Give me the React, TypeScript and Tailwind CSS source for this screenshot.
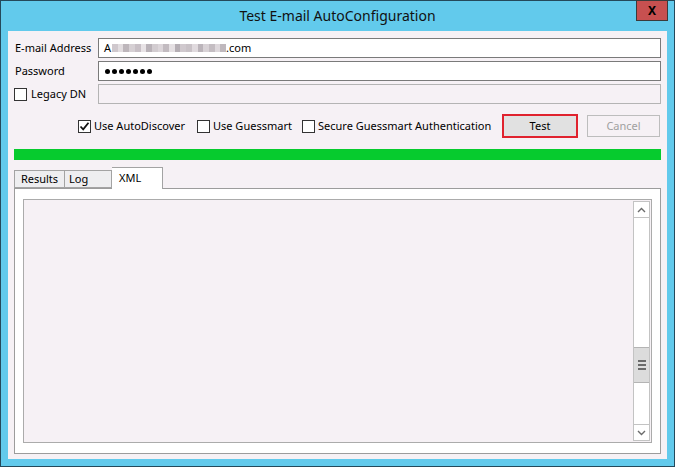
import React from "react";

const font = { fontFamily: '"Noto Sans", "Liberation Sans", Arial, sans-serif' };

// blurred e-mail characters, drawn as soft blocks
const blur = [
  "#cfc8cd", "#e2dde0", "#bdb6bb", "#d6d0d4", "#c8c0c6", "#e8e3e6", "#b9b2b8", "#d2ccd0",
  "#dcd6da", "#c2bbc0", "#e5e0e3", "#b5aeb4", "#d0c9ce", "#c9c2c7", "#e0dade", "#bbb4ba",
  "#d8d2d6", "#c4bdc2", "#ded8dc", "#bfb8bd",
];

function Check({ checked }: { checked?: boolean }) {
  return (
    <span className="flex h-[13px] w-[13px] shrink-0 items-center justify-center border border-[#333333] bg-white">
      {checked && (
        <svg width="11" height="11" viewBox="0 0 11 11">
          <path d="M1.5 5.5 L4.2 8.3 L9.5 1.8" fill="none" stroke="#111" strokeWidth="1.8" />
        </svg>
      )}
    </span>
  );
}

function Chevron({ up }: { up?: boolean }) {
  return (
    <svg width="9" height="6" viewBox="0 0 9 6">
      <path d={up ? "M1 5 L4.5 1.5 L8 5" : "M1 1 L4.5 4.5 L8 1"} fill="none" stroke="#6b6b6b" strokeWidth="1.4" />
    </svg>
  );
}

export default function App() {
  return (
    <div
      className="relative flex h-[467px] w-[675px] flex-col border border-[#24495b] bg-[#62caec] text-[11px] text-black"
      style={font}
    >
      {/* Title bar */}
      <div className="flex h-[30px] shrink-0 items-center justify-center pb-[2px] text-[14px] text-[#111]">
        Test E-mail AutoConfiguration
      </div>
      <div className="absolute -top-px right-[6px] flex h-[21px] w-[32px] items-center justify-center border border-[#3b3b3b] bg-[#c75050] text-[12px] font-bold leading-none text-black">
        X
      </div>

      {/* Client area */}
      <div className="mx-[7px] mb-[7px] flex flex-1 flex-col bg-[#f6f1f5] px-[6px] pt-[7px]">
        <div className="flex h-[20px] items-center">
          <span className="w-[84px] pl-px">E-mail Address</span>
          <div className="flex h-[20px] flex-1 items-center border border-[#7a7a7a] bg-white pl-[5px]">
            <span>A</span>
            <span className="ml-px flex h-[8px] w-[114px]">
              {blur.map((c, i) => (
                <span key={i} className="h-full flex-1" style={{ backgroundColor: c }} />
              ))}
            </span>
            <span>.com</span>
          </div>
        </div>
        <div className="mt-[3px] flex h-[20px] items-center">
          <span className="w-[84px] pl-px">Password</span>
          <div className="flex h-[20px] flex-1 items-center gap-[2px] border border-[#7a7a7a] bg-white pl-[6px]">
            {[0, 1, 2, 3, 4, 5, 6].map((i) => (
              <span key={i} className="h-[5px] w-[5px] rounded-full bg-black" />
            ))}
          </div>
        </div>
        <div className="mt-[3px] flex h-[20px] items-center">
          <span className="flex w-[84px] items-center gap-[4px]">
            <Check />
            Legacy DN
          </span>
          <div className="h-[20px] flex-1 border border-[#b4b4b4] bg-[#f6f1f5]" />
        </div>

        {/* Options + buttons */}
        <div className="mt-[10px] flex h-[24px] items-center">
          <span className="ml-[64px] flex w-[119px] items-center gap-[3px] whitespace-nowrap">
            <Check checked />
            Use AutoDiscover
          </span>
          <span className="flex w-[105px] items-center gap-[3px] whitespace-nowrap">
            <Check />
            Use Guessmart
          </span>
          <span className="flex w-[200px] items-center gap-[3px] whitespace-nowrap">
            <Check />
            Secure Guessmart Authentication
          </span>
          <div className="flex h-[24px] w-[76px] items-center justify-center border-2 border-[#e0222e] bg-[#e1e1e1]">
            Test
          </div>
          <div className="ml-[9px] flex h-[22px] w-[73px] items-center justify-center border border-[#bdbdbd] text-[#a0a0a0]">
            Cancel
          </div>
        </div>

        {/* Progress */}
        <div className="mt-[11px] h-[11px] bg-[#06cb2e]" />

        {/* Tabs */}
        <div className="mt-[7px] flex h-[21px] items-end">
          <div className="flex h-[18px] w-[51px] items-center justify-center border border-[#a3a3a3] bg-[#eeeef0]">
            Results
          </div>
          <div className="flex h-[18px] w-[47px] items-center border border-l-0 border-[#a3a3a3] bg-[#eeeef0] pl-[4px]">
            Log
          </div>
          <div className="relative z-10 -mb-px flex h-[22px] w-[51px] items-start border border-b-0 border-l-0 border-[#a3a3a3] bg-white pl-[7px] pt-[2px]">
            XML
          </div>
        </div>
        <div className="mb-[5px] flex flex-1 flex-col border border-[#9c9c9c] bg-white px-[8px] pt-[10px] pb-[10px]">
          <div className="flex flex-1 justify-end border border-[#ababab] bg-[#f6f1f5] p-px">
            <div className="flex w-[17px] flex-col border border-[#c3c3c3] bg-white">
              <div className="flex h-[16px] items-center justify-center border-b border-[#c3c3c3]">
                <Chevron up />
              </div>
              <div className="flex-1">
                <div className="mt-[129px] flex h-[36px] flex-col items-center justify-center gap-[2px] border-y border-[#b4b4b4] bg-[#dcdcdc]">
                  <span className="h-[2px] w-[8px] bg-[#6a6a6a]" />
                  <span className="h-[2px] w-[8px] bg-[#6a6a6a]" />
                  <span className="h-[2px] w-[8px] bg-[#6a6a6a]" />
                </div>
              </div>
              <div className="flex h-[16px] items-center justify-center border-t border-[#c3c3c3]">
                <Chevron />
              </div>
            </div>
          </div>
        </div>
      </div>
    </div>
  );
}
